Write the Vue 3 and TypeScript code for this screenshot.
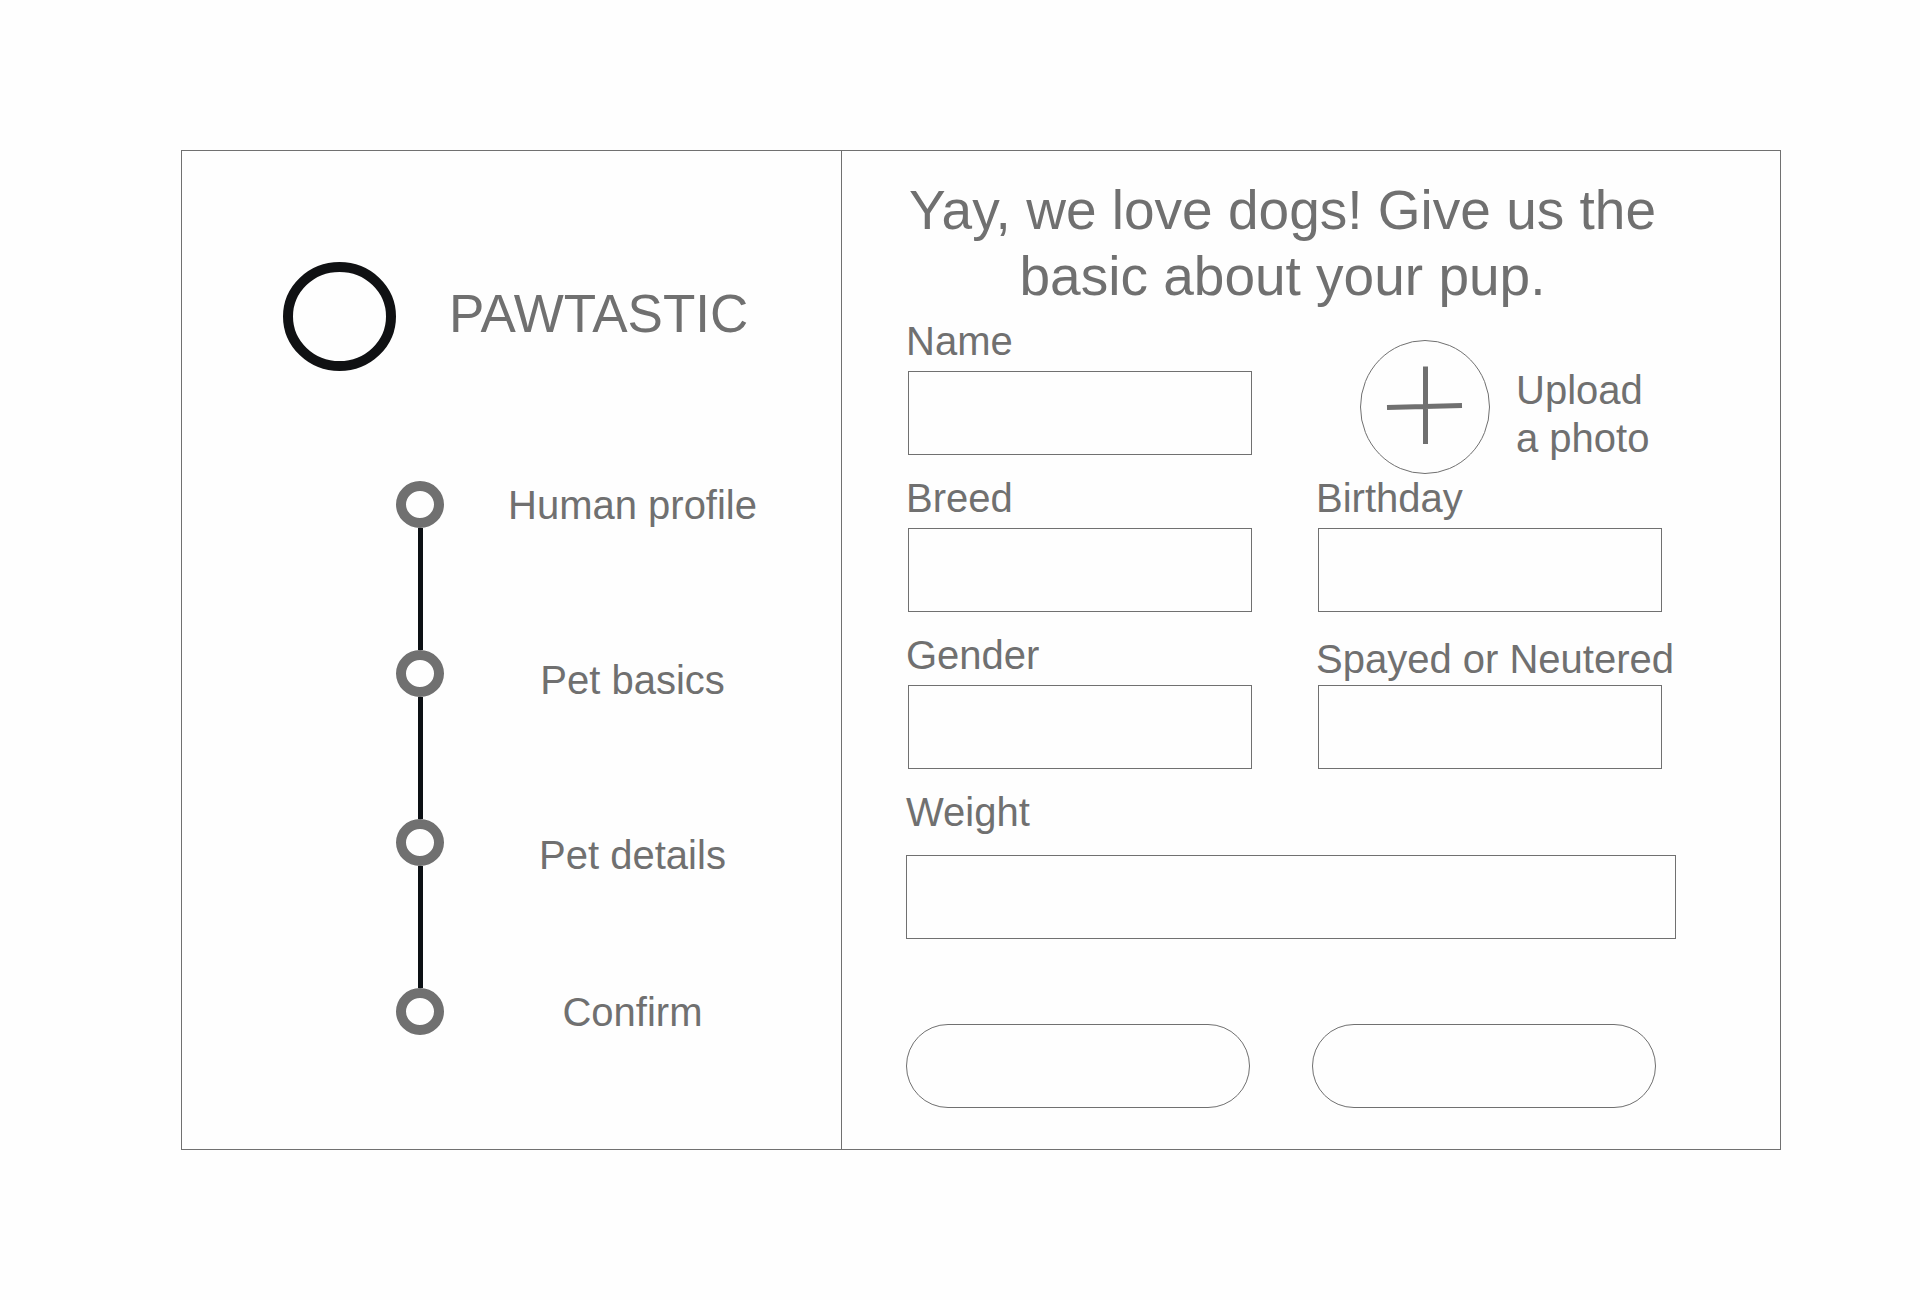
<script setup lang="ts">
import { reactive } from 'vue'

interface Field {
  id: 'name' | 'breed' | 'birthday' | 'gender' | 'neutered'
  label: string
  tight?: boolean
}

const steps: string[] = ['Human profile', 'Pet basics', 'Pet details', 'Confirm']

const nameField: Field = { id: 'name', label: 'Name' }
const detailFields: Field[] = [
  { id: 'breed', label: 'Breed' },
  { id: 'birthday', label: 'Birthday' },
  { id: 'gender', label: 'Gender' },
  { id: 'neutered', label: 'Spayed or Neutered', tight: true },
]

const pet = reactive({
  name: '',
  breed: '',
  birthday: '',
  gender: '',
  neutered: '',
  weight: '',
})
</script>

<template>
  <main class="page">
    <div class="card">
      <aside class="side">
        <div class="brand">
          <svg class="brand-mark" width="113" height="109" viewBox="0 0 113 109" aria-hidden="true">
            <ellipse cx="56.5" cy="54.5" rx="51.5" ry="49.5" fill="none" stroke="#101113" stroke-width="10" />
          </svg>
          <p class="brand-name">PAWTASTIC</p>
        </div>

        <div class="progress">
          <div class="rail" aria-hidden="true">
            <template v-for="(step, i) in steps" :key="step">
              <span v-if="i > 0" class="rail-line"></span>
              <span class="rail-dot"></span>
            </template>
          </div>
          <ol class="steps">
            <li v-for="step in steps" :key="step">{{ step }}</li>
          </ol>
        </div>
      </aside>

      <form class="form" @submit.prevent>
        <h1 class="title">Yay, we love dogs! Give us the<br />basic about your pup.</h1>

        <div class="fields">
          <div class="field">
            <label :for="nameField.id">{{ nameField.label }}</label>
            <input :id="nameField.id" v-model="pet.name" type="text" />
          </div>

          <button type="button" class="upload">
            <svg class="upload-icon" width="130" height="134" viewBox="0 0 130 134" aria-hidden="true">
              <ellipse cx="65" cy="67" rx="64.5" ry="66.5" fill="none" stroke="#707070" />
              <path d="M65.5 26.5V104M27 67.5L102 65.5" fill="none" stroke="#707070" stroke-width="5" />
            </svg>
            <span class="upload-text">Upload<br />a photo</span>
          </button>

          <div v-for="f in detailFields" :key="f.id" class="field" :class="{ 'field-tight': f.tight }">
            <label :for="f.id">{{ f.label }}</label>
            <input :id="f.id" v-model="pet[f.id]" type="text" />
          </div>
        </div>

        <div class="weight">
          <label for="weight">Weight</label>
          <input id="weight" v-model="pet.weight" type="text" />
        </div>

        <div class="actions">
          <button type="button" class="pill" aria-label="Back"></button>
          <button type="submit" class="pill" aria-label="Next"></button>
        </div>
      </form>
    </div>
  </main>
</template>

<style>
body {
  background: #fefefe;
}
</style>

<style scoped>
.page {
  padding: 150px 139px 150px 181px;
  color: #707070;
  font-family: "Liberation Sans", Arial, sans-serif;
  font-size: 40px;
  line-height: 48px;
}

.page *,
.page {
  box-sizing: border-box;
}

.card {
  display: grid;
  grid-template-columns: 660fr 938fr;
  border: 1px solid #707070;
}

.side {
  padding: 111px 0 0 101px;
  border-right: 1px solid #707070;
}

.brand {
  display: flex;
  align-items: flex-start;
  gap: 53px;
}

.brand-mark,
.upload-icon {
  flex: none;
}

.brand-name {
  margin: 0;
  padding-top: 19px;
  font-size: 53px;
  line-height: 66px;
}

.progress {
  display: flex;
  gap: 64px;
  margin-top: 110px;
  padding-left: 113px;
}

.rail {
  display: flex;
  flex-direction: column;
  align-items: center;
}

.rail-dot {
  width: 48px;
  height: 47px;
  border: 10px solid #707070;
  border-radius: 50%;
}

.rail-line {
  width: 5px;
  height: 122px;
  background: #0c1014;
}

.steps {
  display: grid;
  grid-template-rows: 175px 175px 157px 48px;
  margin: 0;
  padding: 0;
  list-style: none;
  text-align: center;
  white-space: nowrap;
}

.form {
  padding: 26px 104px 41px 64px;
}

.title {
  margin: 0 0 8px;
  padding-right: 17px;
  font-size: 55px;
  font-weight: 400;
  line-height: 66px;
  text-align: center;
  white-space: nowrap;
}

.fields {
  display: grid;
  grid-template-columns: repeat(2, minmax(0, 1fr));
  column-gap: 64px;
  padding-right: 14px;
}

.field {
  display: flex;
  flex-direction: column;
  justify-content: flex-end;
  gap: 6px;
  padding-bottom: 19px;
  white-space: nowrap;
}

.field-tight {
  gap: 2px;
}

.field input {
  margin: 0 0 0 2px;
}

input {
  height: 84px;
  padding: 0 16px;
  border: 1px solid #707070;
  border-radius: 0;
  background: transparent;
  color: inherit;
  font: inherit;
}

.upload {
  display: flex;
  align-items: flex-end;
  gap: 26px;
  padding: 23px 0 0 44px;
  border: 0;
  background: none;
  color: inherit;
  font: inherit;
  text-align: left;
  white-space: nowrap;
  cursor: pointer;
}

.upload-text {
  padding-bottom: 12px;
}

.weight {
  display: flex;
  flex-direction: column;
  gap: 19px;
}

.actions {
  display: grid;
  grid-template-columns: repeat(2, minmax(0, 1fr));
  column-gap: 62px;
  margin-top: 85px;
  padding-right: 20px;
}

.pill {
  height: 84px;
  padding: 0;
  border: 1px solid #707070;
  border-radius: 42px;
  background: transparent;
  cursor: pointer;
}
</style>
